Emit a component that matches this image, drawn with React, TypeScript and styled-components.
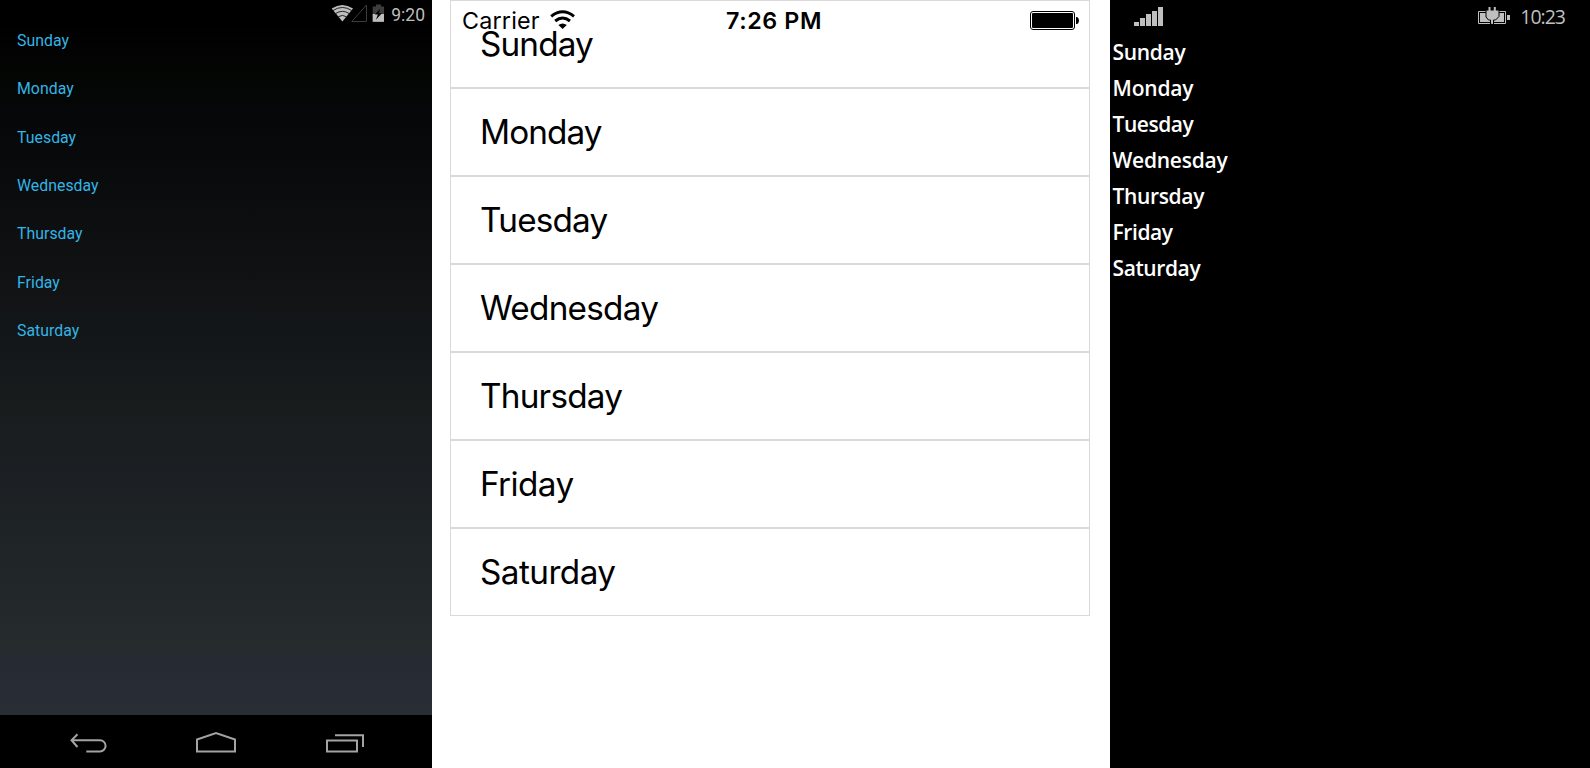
import React from "react";
import styled, { createGlobalStyle } from "styled-components";

const Global = createGlobalStyle`
  html, body, #root { margin: 0; padding: 0; height: 100%; }
  body { background: #fff; overflow: hidden; }
  * { box-sizing: border-box; }
  svg { display: block; flex: none; }
`;

const days = [
  { name: "Sunday", ios: -0.85, windows: -0.3 },
  { name: "Monday", ios: -0.9, windows: -0.2 },
  { name: "Tuesday", ios: -0.8, windows: -0.45 },
  { name: "Wednesday", ios: -0.75, windows: -0.25 },
  { name: "Thursday", ios: -0.75, windows: -0.35 },
  { name: "Friday", ios: -0.6, windows: -0.4 },
  { name: "Saturday", ios: -0.55, windows: -0.4 },
];

const Page = styled.div`
  display: grid;
  grid-template-columns: 432px 18px 640px 20px 480px;
  width: 1590px;
  height: 768px;
`;
const Word = styled.span<{ $spacing?: number }>`
  letter-spacing: ${(p) => p.$spacing ?? 0}px;
  white-space: nowrap;
`;

/* Android */
const Android = styled.section`
  grid-column: 1;
  display: flex;
  flex-direction: column;
  background: linear-gradient(#000 0, #000 26px, #040604 80px, #050709 120px, #111214 280px, #131719 340px, #191d1e 420px, #1b1f23 470px, #23292b 610px, #262b2e 650px, #262a33 658px, #292d34 715px);
  font-family: Roboto, sans-serif;
`;
const AndroidStatus = styled.header`
  display: flex;
  justify-content: flex-end;
  height: 28px;
  padding-right: 7px;
  color: #bebebe;
  font-size: 17.5px;
  line-height: 30px;
`;
const AndroidList = styled.ul`
  flex: 1;
  margin: 0;
  padding: 0 0 0 17px;
  list-style: none;
`;
const AndroidRow = styled.li`
  height: 48.33px;
  color: #33b5e5;
  font-size: 15.8px;
  line-height: 26.6px;
`;
const AndroidNav = styled.nav`
  display: flex;
  height: 53px;
  background: #000;
`;

/* iOS */
const Ios = styled.section`
  grid-column: 3;
  display: grid;
  align-content: start;
  background: #fff;
  color: #000;
  font-family: Inter, sans-serif;
`;
const IosStatus = styled.header`
  grid-area: 1 / 1;
  z-index: 1;
  display: grid;
  grid-template-columns: 1fr auto 1fr;
  height: 40px;
  padding: 0 11px 0 12px;
  font-size: 23.3px;
  line-height: 41px;
`;
const IosCarrier = styled.div`
  display: flex;
  gap: 10px;
`;
const IosTime = styled.div`
  font-weight: 600;
  padding-left: 7px;
`;
const IosBattery = styled.div`
  display: flex;
  justify-content: flex-end;
`;
const IosList = styled.ul`
  grid-area: 1 / 1;
  margin: 0;
  padding: 0;
  list-style: none;
`;
const IosRow = styled.li`
  height: 88px;
  padding-left: 29px;
  border: 1px solid #d9d9d9;
  font-size: 33.3px;
  line-height: 86px;
`;

/* Windows Phone */
const Windows = styled.section`
  grid-column: 5;
  background: #000;
  color: #fff;
  font-family: "Open Sans", sans-serif;
`;
const WindowsStatus = styled.header`
  display: flex;
  justify-content: space-between;
  height: 34px;
  padding: 0 25px 0 24px;
  color: #bfbfbf;
`;
const WindowsTray = styled.div`
  display: flex;
  gap: 10px;
  font-size: 19.5px;
  line-height: 33px;
`;
const WindowsList = styled.ul`
  margin: 0;
  padding: 0 0 0 2.5px;
  list-style: none;
`;
const WindowsRow = styled.li`
  height: 36px;
  font-size: 21px;
  font-weight: 600;
  line-height: 37.6px;
`;

const AndroidIcons = () => (
  <svg width="60" height="26" viewBox="331 0 60 26">
    <path d="M331.7 8.6Q342.4 1.6 353 8.6L342.4 21.4Z" fill="#bebebe" />
    <path d="M332.9 10.6q9.5-6.3 19 0M335.5 13.6q6.9-4.6 13.8 0M338.2 16.8q4.2-2.8 8.4 0" fill="none" stroke="#222" strokeWidth="1" />
    <path d="M351.8 21.5H366.5V5Z" fill="none" stroke="#3c3c3c" strokeWidth="1" />
    <path d="M372.7 6.5h3.3V4.5h5v2h3v15.3h-11.3Z" fill="#3d3d3d" />
    <path d="M372.7 14H384v7.8h-11.3Z" fill="#bebebe" />
    <path d="M380.5 8.5l-5.6 6.1h3l-2 5.2 6-6.6h-3.2Z" fill="#000" />
  </svg>
);

const AndroidButtons = () => (
  <svg width="432" height="53" viewBox="0 715 432 53" fill="none" stroke="#a3a3a3" strokeWidth="2">
    <path d="M86.3 751.4H100a5.6 5.6 0 0 0 0-11.2H71.5M77.5 734.2l-6 6 6 6.8" />
    <path d="M197 751.4V739.5l19-6.4 19 6.4v11.9Z" />
    <path d="M327 740.4h30v11h-30ZM335 735.2h28V747" />
  </svg>
);

const IosWifi = () => (
  <svg width="26" height="32" viewBox="550 0 26 32" fill="none" stroke="#000">
    <path d="M551.2 16.3Q562.6 7.2 574 16.3" strokeWidth="3" />
    <path d="M555.2 21Q562.6 15 570 21" strokeWidth="3" />
    <path d="M558.4 25.1Q562.6 22 566.8 25.1L562.6 29Z" fill="#000" stroke="none" />
  </svg>
);

const IosBatteryIcon = () => (
  <svg width="49" height="32" viewBox="1030 0 49 32">
    <rect x="1030.5" y="11.5" width="44" height="18" rx="2.5" fill="#fff" stroke="#000" />
    <rect x="1032" y="13" width="41" height="15" rx="1" />
    <path d="M1076 17h1.2q1.8 1.2 1.8 3.5t-1.8 3.5H1076Z" />
  </svg>
);

const SignalBars = () => (
  <svg width="30" height="27" viewBox="0 0 30 27" fill="#bfbfbf">
    <path d="M0 22h5v4H0ZM6 18h5v8H6ZM12 14h5v12h-5ZM18 11h5v15h-5ZM24 7h5v19h-5Z" />
  </svg>
);

const ChargingBattery = () => (
  <svg width="32" height="27" viewBox="1478 0 32 27">
    <path d="M1478.5 11.5h27v12h-27Z" fill="none" stroke="#bfbfbf" />
    <path d="M1480 13h24v9h-24ZM1507 15h3v5h-3Z" fill="#bfbfbf" />
    <path d="M1486 10h13v6.5l-3.5 3.5h-2v4h-3v-4h-2L1486 17Z" fill="#bfbfbf" stroke="#000" />
    <path d="M1488.5 7h2v4h-2ZM1493.8 7h2v4h-2Z" fill="#bfbfbf" />
    <path d="M1487 11h11v5.3l-3 2.7h-2v5h-1.5v-5h-2L1487 16.3Z" fill="#bfbfbf" />
  </svg>
);

export default function App() {
  return (
    <>
      <Global />
      <Page>
        <Android>
          <AndroidStatus><AndroidIcons /><Word>9:20</Word></AndroidStatus>
          <AndroidList>
            {days.map((day) => <AndroidRow key={day.name}><Word $spacing={0.05}>{day.name}</Word></AndroidRow>)}
          </AndroidList>
          <AndroidNav><AndroidButtons /></AndroidNav>
        </Android>
        <Ios>
          <IosStatus>
            <IosCarrier><Word $spacing={0.2}>Carrier</Word><IosWifi /></IosCarrier>
            <IosTime><Word $spacing={0.6}>7:26 PM</Word></IosTime>
            <IosBattery><IosBatteryIcon /></IosBattery>
          </IosStatus>
          <IosList>
            {days.map((day) => <IosRow key={day.name}><Word $spacing={day.ios}>{day.name}</Word></IosRow>)}
          </IosList>
        </Ios>
        <Windows>
          <WindowsStatus>
            <SignalBars />
            <WindowsTray><ChargingBattery /><Word $spacing={-1}>10:23</Word></WindowsTray>
          </WindowsStatus>
          <WindowsList>
            {days.map((day) => <WindowsRow key={day.name}><Word $spacing={day.windows}>{day.name}</Word></WindowsRow>)}
          </WindowsList>
        </Windows>
      </Page>
    </>
  );
}
